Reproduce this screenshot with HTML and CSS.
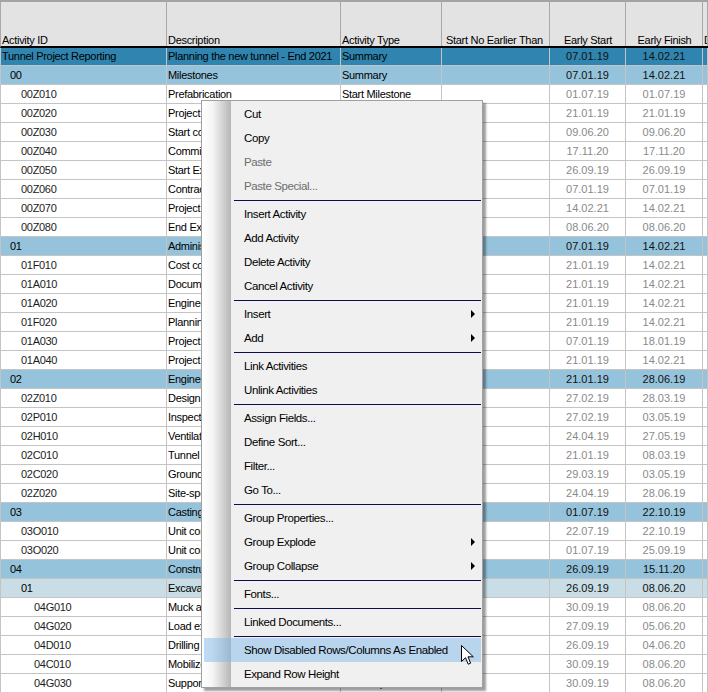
FILE: index.html
```html
<!DOCTYPE html>
<html>
<head>
<meta charset="utf-8">
<link rel="stylesheet" href="styles.css">
</head>
<body>
<div class="grid">
  <div class="hdr cols">
    <div>Activity ID</div>
    <div>Description</div>
    <div>Activity Type</div>
    <div class="snet">Start No Earlier Than</div>
    <div class="ctr">Early Start</div>
    <div class="ctr">Early Finish</div>
    <div>D</div>
  </div>

  <div class="row cols top"><div class="id i0">Tunnel Project Reporting</div><div class="desc">Planning the new tunnel - End 2021</div><div class="desc">Summary</div><div></div><div class="dt">07.01.19</div><div class="dt">14.02.21</div><div></div></div>
  <div class="row cols l1"><div class="id i1">00</div><div class="desc">Milestones</div><div class="desc">Summary</div><div></div><div class="dt">07.01.19</div><div class="dt">14.02.21</div><div></div></div>
  <div class="row cols leaf"><div class="id i2">00Z010</div><div class="desc">Prefabrication</div><div class="desc">Start Milestone</div><div></div><div class="dt">01.07.19</div><div class="dt">01.07.19</div><div></div></div>
  <div class="row cols leaf"><div class="id i2">00Z020</div><div class="desc">Project start</div><div class="desc">Start Milestone</div><div></div><div class="dt">21.01.19</div><div class="dt">21.01.19</div><div></div></div>
  <div class="row cols leaf"><div class="id i2">00Z030</div><div class="desc">Start construction</div><div class="desc">Start Milestone</div><div></div><div class="dt">09.06.20</div><div class="dt">09.06.20</div><div></div></div>
  <div class="row cols leaf"><div class="id i2">00Z040</div><div class="desc">Commissioning</div><div class="desc">Finish Milestone</div><div></div><div class="dt">17.11.20</div><div class="dt">17.11.20</div><div></div></div>
  <div class="row cols leaf"><div class="id i2">00Z050</div><div class="desc">Start Excavation</div><div class="desc">Start Milestone</div><div></div><div class="dt">26.09.19</div><div class="dt">26.09.19</div><div></div></div>
  <div class="row cols leaf"><div class="id i2">00Z060</div><div class="desc">Contract award</div><div class="desc">Start Milestone</div><div></div><div class="dt">07.01.19</div><div class="dt">07.01.19</div><div></div></div>
  <div class="row cols leaf"><div class="id i2">00Z070</div><div class="desc">Project completion</div><div class="desc">Finish Milestone</div><div></div><div class="dt">14.02.21</div><div class="dt">14.02.21</div><div></div></div>
  <div class="row cols leaf"><div class="id i2">00Z080</div><div class="desc">End Excavation</div><div class="desc">Finish Milestone</div><div></div><div class="dt">08.06.20</div><div class="dt">08.06.20</div><div></div></div>
  <div class="row cols l1"><div class="id i1">01</div><div class="desc">Administration</div><div class="desc">Summary</div><div></div><div class="dt">07.01.19</div><div class="dt">14.02.21</div><div></div></div>
  <div class="row cols leaf"><div class="id i2">01F010</div><div class="desc">Cost control</div><div class="desc">Level of Effort</div><div></div><div class="dt">21.01.19</div><div class="dt">14.02.21</div><div></div></div>
  <div class="row cols leaf"><div class="id i2">01A010</div><div class="desc">Documentation</div><div class="desc">Level of Effort</div><div></div><div class="dt">21.01.19</div><div class="dt">14.02.21</div><div></div></div>
  <div class="row cols leaf"><div class="id i2">01A020</div><div class="desc">Engineering management</div><div class="desc">Level of Effort</div><div></div><div class="dt">21.01.19</div><div class="dt">14.02.21</div><div></div></div>
  <div class="row cols leaf"><div class="id i2">01F020</div><div class="desc">Planning and scheduling</div><div class="desc">Level of Effort</div><div></div><div class="dt">21.01.19</div><div class="dt">14.02.21</div><div></div></div>
  <div class="row cols leaf"><div class="id i2">01A030</div><div class="desc">Project kick-off</div><div class="desc">Task Dependent</div><div></div><div class="dt">07.01.19</div><div class="dt">18.01.19</div><div></div></div>
  <div class="row cols leaf"><div class="id i2">01A040</div><div class="desc">Project management</div><div class="desc">Level of Effort</div><div></div><div class="dt">21.01.19</div><div class="dt">14.02.21</div><div></div></div>
  <div class="row cols l1"><div class="id i1">02</div><div class="desc">Engineering</div><div class="desc">Summary</div><div></div><div class="dt">21.01.19</div><div class="dt">28.06.19</div><div></div></div>
  <div class="row cols leaf"><div class="id i2">02Z010</div><div class="desc">Design approval</div><div class="desc">Task Dependent</div><div></div><div class="dt">27.02.19</div><div class="dt">28.03.19</div><div></div></div>
  <div class="row cols leaf"><div class="id i2">02P010</div><div class="desc">Inspection plan</div><div class="desc">Task Dependent</div><div></div><div class="dt">27.02.19</div><div class="dt">03.05.19</div><div></div></div>
  <div class="row cols leaf"><div class="id i2">02H010</div><div class="desc">Ventilation design</div><div class="desc">Task Dependent</div><div></div><div class="dt">24.04.19</div><div class="dt">27.05.19</div><div></div></div>
  <div class="row cols leaf"><div class="id i2">02C010</div><div class="desc">Tunnel alignment design</div><div class="desc">Task Dependent</div><div></div><div class="dt">21.01.19</div><div class="dt">08.03.19</div><div></div></div>
  <div class="row cols leaf"><div class="id i2">02C020</div><div class="desc">Ground investigation</div><div class="desc">Task Dependent</div><div></div><div class="dt">29.03.19</div><div class="dt">03.05.19</div><div></div></div>
  <div class="row cols leaf"><div class="id i2">02Z020</div><div class="desc">Site-specific design</div><div class="desc">Task Dependent</div><div></div><div class="dt">24.04.19</div><div class="dt">28.06.19</div><div></div></div>
  <div class="row cols l1"><div class="id i1">03</div><div class="desc">Casting yard</div><div class="desc">Summary</div><div></div><div class="dt">01.07.19</div><div class="dt">22.10.19</div><div></div></div>
  <div class="row cols leaf"><div class="id i2">03O010</div><div class="desc">Unit construction 1</div><div class="desc">Task Dependent</div><div></div><div class="dt">22.07.19</div><div class="dt">22.10.19</div><div></div></div>
  <div class="row cols leaf"><div class="id i2">03O020</div><div class="desc">Unit construction 2</div><div class="desc">Task Dependent</div><div></div><div class="dt">01.07.19</div><div class="dt">25.09.19</div><div></div></div>
  <div class="row cols l1"><div class="id i1">04</div><div class="desc">Construction</div><div class="desc">Summary</div><div></div><div class="dt">26.09.19</div><div class="dt">15.11.20</div><div></div></div>
  <div class="row cols l2"><div class="id i2">01</div><div class="desc">Excavation</div><div class="desc">Summary</div><div></div><div class="dt">26.09.19</div><div class="dt">08.06.20</div><div></div></div>
  <div class="row cols leaf"><div class="id i3">04G010</div><div class="desc">Muck and haul</div><div class="desc">Task Dependent</div><div></div><div class="dt">30.09.19</div><div class="dt">08.06.20</div><div></div></div>
  <div class="row cols leaf"><div class="id i3">04G020</div><div class="desc">Load explosives</div><div class="desc">Task Dependent</div><div></div><div class="dt">27.09.19</div><div class="dt">05.06.20</div><div></div></div>
  <div class="row cols leaf"><div class="id i3">04D010</div><div class="desc">Drilling</div><div class="desc">Task Dependent</div><div></div><div class="dt">26.09.19</div><div class="dt">04.06.20</div><div></div></div>
  <div class="row cols leaf"><div class="id i3">04C010</div><div class="desc">Mobilize equipment</div><div class="desc">Task Dependent</div><div></div><div class="dt">30.09.19</div><div class="dt">08.06.20</div><div></div></div>
  <div class="row cols leaf"><div class="id i3">04G030</div><div class="desc">Support installation</div><div class="desc">Task Dependent</div><div></div><div class="dt">30.09.19</div><div class="dt">08.06.20</div><div></div></div>
</div>

<div class="menu">
  <div class="item">Cut</div>
  <div class="item">Copy</div>
  <div class="item dis">Paste</div>
  <div class="item dis">Paste Special...</div>
  <div class="sep"></div>
  <div class="item">Insert Activity</div>
  <div class="item">Add Activity</div>
  <div class="item">Delete Activity</div>
  <div class="item">Cancel Activity</div>
  <div class="sep"></div>
  <div class="item sub">Insert</div>
  <div class="item sub">Add</div>
  <div class="sep"></div>
  <div class="item">Link Activities</div>
  <div class="item">Unlink Activities</div>
  <div class="sep"></div>
  <div class="item">Assign Fields...</div>
  <div class="item">Define Sort...</div>
  <div class="item">Filter...</div>
  <div class="item">Go To...</div>
  <div class="sep"></div>
  <div class="item">Group Properties...</div>
  <div class="item sub">Group Explode</div>
  <div class="item sub">Group Collapse</div>
  <div class="sep"></div>
  <div class="item">Fonts...</div>
  <div class="sep"></div>
  <div class="item">Linked Documents...</div>
  <div class="sep"></div>
  <div class="item hl">Show Disabled Rows/Columns As Enabled</div>
  <div class="item">Expand Row Height</div>
</div>

<svg class="cursor" width="14" height="22" viewBox="0 0 14 22">
  <path d="M0.5 0.5 L0.5 16.5 L4.5 12.7 L7.2 19.2 L9.6 18.2 L7 11.8 L12.3 11.8 Z" fill="#fff" stroke="#000" stroke-width="1" stroke-linejoin="miter"/>
</svg>
</body>
</html>
```

FILE: styles.css
```css
html, body {
  margin: 0;
  padding: 0;
}
body {
  width: 708px;
  height: 692px;
  overflow: hidden;
  position: relative;
  background: #ffffff;
  font-family: "Liberation Sans", Arial, sans-serif;
  font-size: 11px;
  color: #000;
}
.grid {
  border-top: 2px solid #a3a3a3;
  letter-spacing: -0.3px;
}
.cols {
  display: grid;
  grid-template-columns: 166px 174px 101px 108px 76px 77px 1fr;
}
.cols > div {
  box-sizing: border-box;
  white-space: nowrap;
  overflow: hidden;
}
.hdr {
  height: 46px;
  box-sizing: border-box;
  background: #e3e3e3;
  border-bottom: 2px solid #000;
  border-left: 1px solid #a8a8a8;
}
.hdr > div {
  border-right: 1px solid #a8a8a8;
  display: flex;
  align-items: flex-end;
  line-height: 12px;
  padding-left: 1px;
}
.hdr > div.snet {
  padding-left: 4px;
}
.hdr > div.ctr {
  justify-content: center;
}
.row {
  height: 19px;
  box-sizing: border-box;
  border-left: 1px solid #c4c4c4;
  border-bottom: 1px solid #c4c4c4;
  line-height: 18px;
}
.row.top {
  height: 18px;
  line-height: 17px;
  background: #2f85af;
}
.row.l1 {
  background: #95c3db;
}
.row.l2 {
  background: #c8dde5;
}
.row > div {
  border-right: 1px solid #c4c4c4;
}
.row .desc {
  padding-left: 1px;
}
.row .dt {
  text-align: center;
  color: #111;
  letter-spacing: 0;
}
.row.leaf .dt {
  color: #8a8a8a;
}
.row.leaf .id {
  color: #1c1c1c;
}
.i0 { padding-left: 1px; }
.i1 { padding-left: 9px; }
.i2 { padding-left: 20px; }
.i3 { padding-left: 33px; }

.menu {
  position: absolute;
  left: 201px;
  top: 100px;
  width: 282px;
  box-sizing: border-box;
  border: 1px solid #a0a0a0;
  padding: 1px 0;
  background: linear-gradient(to right, #ffffff 0, #f6f6f6 10px, #d6d6d6 20px, #b6b6b6 29px, #f0f0f0 29px);
  box-shadow: 3px 3px 2px rgba(0, 0, 0, 0.38);
  font-family: "Liberation Sans", Arial, sans-serif;
  font-size: 11.5px;
  letter-spacing: -0.4px;
}
.item {
  height: 24px;
  line-height: 24px;
  padding-left: 42px;
  position: relative;
  color: #000;
  white-space: nowrap;
}
.item.dis {
  color: #6d6d6d;
}
.item.hl {
  background: rgba(130, 185, 235, 0.5);
  margin: 0 1px 0 2px;
  padding-left: 40px;
}
.item.sub::after {
  content: "";
  position: absolute;
  right: 7px;
  top: 8px;
  border-left: 4px solid #000;
  border-top: 4px solid transparent;
  border-bottom: 4px solid transparent;
}
.sep {
  height: 1px;
  background: #0c0c4e;
  margin: 2px 1px 1px 32px;
}
.cursor {
  position: absolute;
  left: 461px;
  top: 645px;
}
```
